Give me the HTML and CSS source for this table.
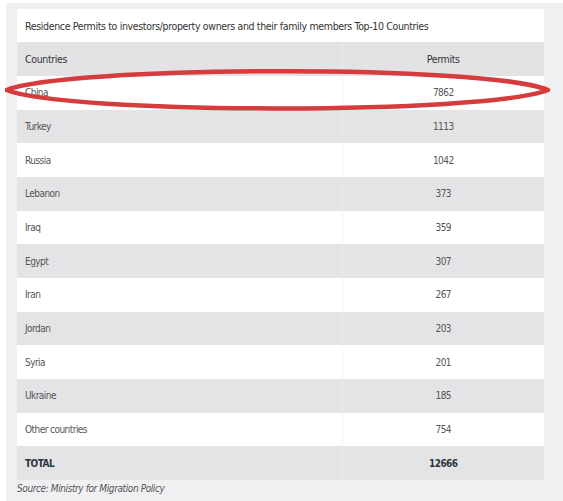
FILE: index.html
```html
<!DOCTYPE html>
<html>
<head>
<meta charset="utf-8">
<link rel="stylesheet" href="styles.css">
</head>
<body>
<div class="panel">
  <div class="wrap">
    <table class="permits">
      <tr class="title"><td colspan="2">Residence Permits to investors/property owners and their family members Top-10 Countries</td></tr>
      <tr class="head"><td>Countries</td><td class="num">Permits</td></tr>
      <tr class="light"><td>China</td><td class="num">7862</td></tr>
      <tr class="dark"><td>Turkey</td><td class="num">1113</td></tr>
      <tr class="light"><td>Russia</td><td class="num">1042</td></tr>
      <tr class="dark"><td>Lebanon</td><td class="num">373</td></tr>
      <tr class="light"><td>Iraq</td><td class="num">359</td></tr>
      <tr class="dark"><td>Egypt</td><td class="num">307</td></tr>
      <tr class="light"><td>Iran</td><td class="num">267</td></tr>
      <tr class="dark"><td>Jordan</td><td class="num">203</td></tr>
      <tr class="light"><td>Syria</td><td class="num">201</td></tr>
      <tr class="dark"><td>Ukraine</td><td class="num">185</td></tr>
      <tr class="light"><td>Other countries</td><td class="num">754</td></tr>
      <tr class="dark total"><td>TOTAL</td><td class="num">12666</td></tr>
    </table>
    <svg class="circle" width="550" height="60" viewBox="0 0 550 60">
      <path d="M1.5 30 C 60 6, 480 4, 543 30 C 480 55, 60 54, 1.5 30 Z" fill="none" stroke="#d63b3d" stroke-width="4.5" stroke-linejoin="round"/>
    </svg>
  </div>
  <p class="source">Source: Ministry for Migration Policy</p>
</div>
</body>
</html>
```
FILE: styles.css
```css
html, body {
  margin: 0;
  padding: 0;
  background: #ffffff;
}
body {
  font-family: "DejaVu Sans Condensed", "Liberation Sans Narrow", "Liberation Sans", sans-serif;
  padding: 3px 0 0 6px;
}
.panel {
  background: #f0f0f3;
  padding: 6px 19px 0 11px;
  height: 498px;
  box-sizing: border-box;
}
.wrap {
  position: relative;
  width: 527px;
}
.permits {
  width: 527px;
  border-collapse: collapse;
  font-size: 10px;
  letter-spacing: -0.55px;
  color: #555;
}
.permits td {
  height: 33.67px;
  padding: 0 0 0 8px;
  box-sizing: border-box;
  vertical-align: middle;
}
.permits td.num {
  text-align: center;
  width: 202px;
  padding: 0;
  border-left: 1px solid #ececee;
}
.title td {
  background: #fff;
  color: #333;
  height: 33px;
  font-size: 10.5px;
  letter-spacing: -0.35px;
}
.head td {
  background: #e3e3e6;
  color: #333;
  height: 34px;
  font-size: 10.5px;
  letter-spacing: -0.35px;
}
.head td.num { border-left-color: #eaeaec; }
.light td { background: #ffffff; }
.light td.num { border-left-color: #f3f3f4; }
.dark td { background: #e4e4e6; }
.dark td.num { border-left-color: #eaeaec; }
.total td {
  font-weight: bold;
  color: #2e3440;
}
.circle {
  position: absolute;
  left: -12px;
  top: 51px;
}
.source {
  margin: 3px 0 0 0;
  font-style: italic;
  font-size: 10px;
  letter-spacing: -0.4px;
  color: #555;
}
```
